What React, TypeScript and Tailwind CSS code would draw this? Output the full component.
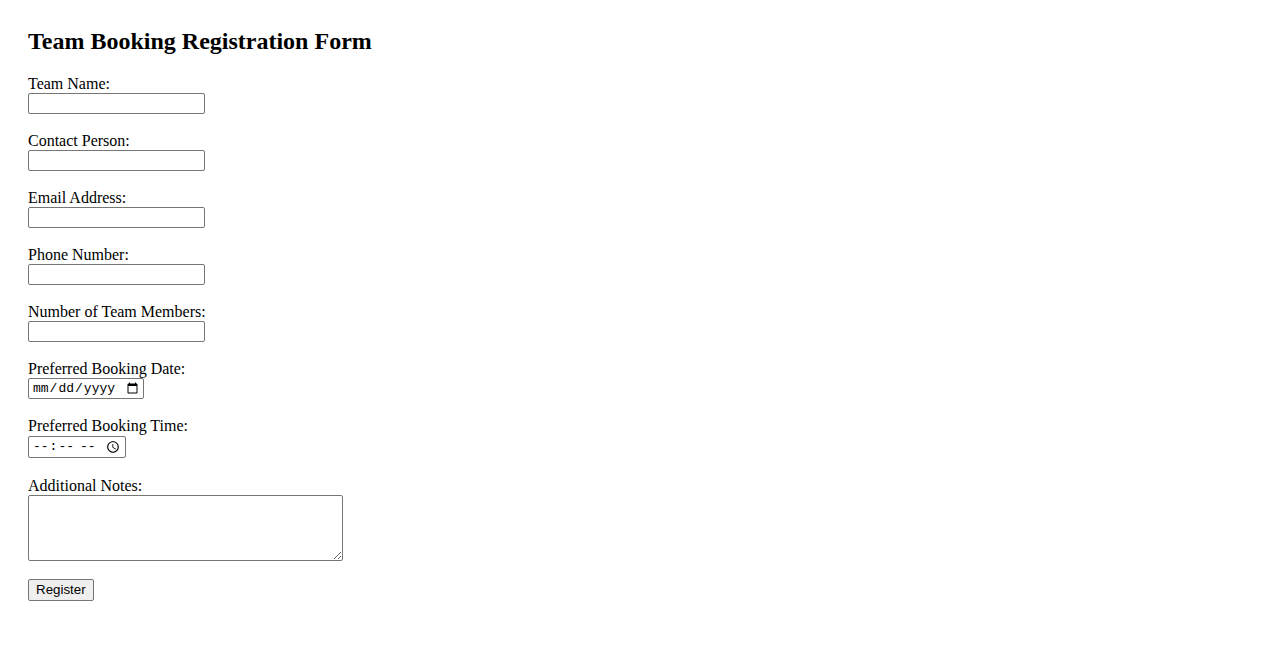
const fields = [
  { id: "teamName", label: "Team Name:", type: "text" },
  { id: "contactPerson", label: "Contact Person:", type: "text" },
  { id: "email", label: "Email Address:", type: "email" },
  { id: "phone", label: "Phone Number:", type: "tel" },
  { id: "members", label: "Number of Team Members:", type: "number" },
];

const inputBox =
  "block h-[21px] border border-[#767676] rounded-[2px] bg-white px-[2px] text-[13.33px] font-['Liberation_Sans',sans-serif] text-black";

export default function App() {
  return (
    <div className="min-h-screen bg-white px-[28px] pt-[28px] font-['Liberation_Serif',serif] text-[16px] text-black">
      <h2 className="text-[24px] font-bold leading-[27px] mb-[20px]">Team Booking Registration Form</h2>

      <form className="flex flex-col" onSubmit={(e) => e.preventDefault()}>
        {fields.map((f) => (
          <div key={f.id} className="mb-[18px]">
            <label htmlFor={f.id} className="block leading-[18px]">
              {f.label}
            </label>
            <input id={f.id} type={f.type} className={`${inputBox} w-[177px] appearance-none`} />
          </div>
        ))}

        {/* date */}
        <div className="mb-[18px]">
          <label htmlFor="date" className="block leading-[18px]">
            Preferred Booking Date:
          </label>
          <input
            id="date"
            type="date"
            className="block h-[21px] w-[116px] border border-[#767676] rounded-[2px] bg-white pl-[3px] pr-[2px] text-[13px] font-['Liberation_Mono',monospace]"
          />
        </div>

        {/* time */}
        <div className="mb-[19px]">
          <label htmlFor="time" className="block leading-[18px] mb-[1px]">
            Preferred Booking Time:
          </label>
          <input
            id="time"
            type="time"
            className="block h-[22px] w-[98px] border border-[#767676] rounded-[2px] bg-white pl-[3px] pr-[2px] text-[13px] font-['Liberation_Mono',monospace]"
          />
        </div>

        <div className="mb-[18px]">
          <label htmlFor="notes" className="block leading-[18px]">
            Additional Notes:
          </label>
          <textarea
            id="notes"
            className="block h-[66px] w-[315px] border border-[#767676] rounded-[2px] bg-white p-[2px] text-[13px] font-['Liberation_Mono',monospace]"
          />
        </div>

        <div className="flex">
          <button
            type="submit"
            className="block h-[22px] px-[7px] border border-[#767676] rounded-[2px] bg-[#efefef] text-[13.33px] leading-[18px] font-['Liberation_Sans',sans-serif] text-black"
          >
            Register
          </button>
        </div>
      </form>
    </div>
  );
}
